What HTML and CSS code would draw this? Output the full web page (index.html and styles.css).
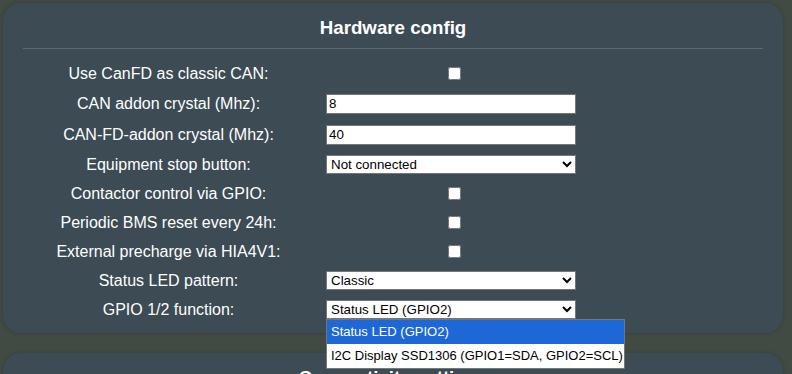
FILE: index.html
```html
<!DOCTYPE html>
<html lang="en">
<head>
<meta charset="utf-8">
<title>Hardware config</title>
<link rel="stylesheet" href="styles.css">
</head>
<body>
<main class="page">
  <section class="card">
    <h3 class="card-title">Hardware config</h3>
    <hr class="divider">
    <div class="form-grid">
      <label class="field-label">Use CanFD as classic CAN:</label>
      <input class="check" type="checkbox">

      <label class="field-label">CAN addon crystal (Mhz):</label>
      <input class="text-input" type="text" value="8">

      <label class="field-label">CAN-FD-addon crystal (Mhz):</label>
      <input class="text-input" type="text" value="40">

      <label class="field-label">Equipment stop button:</label>
      <select class="select-input"><option>Not connected</option></select>

      <label class="field-label">Contactor control via GPIO:</label>
      <input class="check" type="checkbox">

      <label class="field-label">Periodic BMS reset every 24h:</label>
      <input class="check" type="checkbox">

      <label class="field-label">External precharge via HIA4V1:</label>
      <input class="check" type="checkbox">

      <label class="field-label">Status LED pattern:</label>
      <select class="select-input"><option>Classic</option></select>

      <label class="field-label">GPIO 1/2 function:</label>
      <div class="select-wrap">
        <select class="select-input"><option>Status LED (GPIO2)</option></select>
        <ul class="dropdown-list">
          <li class="dropdown-item is-selected">Status LED (GPIO2)</li>
          <li class="dropdown-item">I2C Display SSD1306 (GPIO1=SDA, GPIO2=SCL)</li>
        </ul>
      </div>
    </div>
  </section>
  <section class="card">
    <h3 class="card-title">Connectivity settings</h3>
  </section>
</main>
</body>
</html>
```

FILE: styles.css
```css
html, body {
  margin: 0;
  padding: 0;
}

body {
  background: #414b43;
  font-family: "Liberation Sans", Arial, sans-serif;
  color: #ffffff;
  overflow: hidden;
}

.page {
  padding: 3px 0 0 3px;
}

.card {
  width: 780px;
  box-sizing: border-box;
  background: #3c4b54;
  border-radius: 18px;
  padding: 14px 20px 14px;
  margin-bottom: 20px;
  box-shadow: 0 0 4px rgba(0, 0, 0, 0.18);
}

.card-title {
  margin: 0;
  font-size: 18.72px;
  line-height: 22px;
  font-weight: bold;
  text-align: center;
  color: #ffffff;
}

.divider {
  border: none;
  height: 1px;
  background: #5a6971;
  margin: 9px 0 15px;
}

.form-grid {
  display: grid;
  grid-template-columns: 291px 257px;
  grid-template-rows: 19px 21px 21px 19px 19px 19px 19px 19px 19px;
  column-gap: 12px;
  row-gap: 10px;
  align-items: center;
}

.field-label {
  font-size: 16px;
  line-height: 19px;
  text-align: center;
  color: #ffffff;
}

.check {
  margin: 0;
  width: 13px;
  height: 13px;
  justify-self: center;
}

.text-input {
  box-sizing: border-box;
  width: 250px;
  height: 20px;
  margin: 0;
  padding: 1px 2px;
  border: 1px solid #767676;
  background: #ffffff;
  color: #000000;
  font-family: "Liberation Sans", Arial, sans-serif;
  font-size: 13.33px;
}

.select-input {
  box-sizing: border-box;
  width: 250px;
  height: 19px;
  margin: 0;
  border: 1px solid #767676;
  border-radius: 0;
  background: #ffffff;
  color: #000000;
  font-family: "Liberation Sans", Arial, sans-serif;
  font-size: 13.33px;
}

.select-wrap {
  position: relative;
  height: 19px;
}

.dropdown-list {
  position: absolute;
  top: 19px;
  left: 0;
  width: 299px;
  box-sizing: border-box;
  margin: 0;
  padding: 0;
  list-style: none;
  background: #ffffff;
  border: 1px solid #767676;
  z-index: 10;
}

.dropdown-item {
  height: 24px;
  line-height: 24px;
  padding: 0 4px;
  font-family: "Liberation Sans", Arial, sans-serif;
  font-size: 13px;
  color: #000000;
  white-space: nowrap;
}

.dropdown-item.is-selected {
  background: #1d68d6;
  color: #ffffff;
}
```
